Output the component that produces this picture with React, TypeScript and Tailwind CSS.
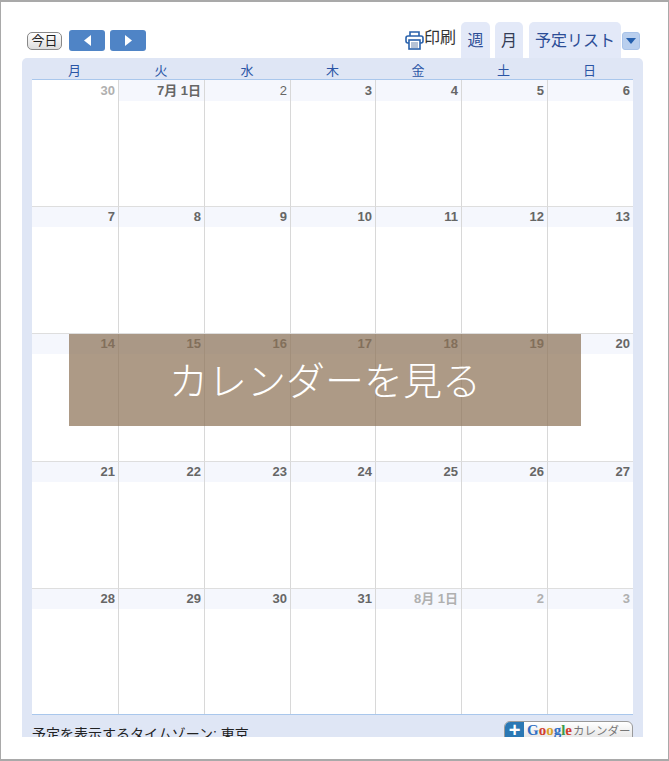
const font = { fontFamily: '"Liberation Sans", "Noto Sans CJK JP", sans-serif' }

const weekdays = ['月', '火', '水', '木', '金', '土', '日']

const weeks = [
  ['30', '7月 1日', '2', '3', '4', '5', '6'],
  ['7', '8', '9', '10', '11', '12', '13'],
  ['14', '15', '16', '17', '18', '19', '20'],
  ['21', '22', '23', '24', '25', '26', '27'],
  ['28', '29', '30', '31', '8月 1日', '2', '3'],
]

function isOtherMonth(week: number, day: number) {
  return (week === 0 && day === 0) || (week === 4 && day >= 4)
}

function DayCell({ label, week, day }: { label: string; week: number; day: number }) {
  const other = isOtherMonth(week, day)
  const plain = week === 0 && day === 0
  return (
    <div className={`min-w-0 ${day < 6 ? 'border-r border-r-[#d8d8d8]' : ''} ${week > 0 ? 'border-t border-t-[#dedede]' : ''}`}>
      <div
        className={`pr-[3px] text-right text-[13px] leading-[17px] ${week === 0 ? 'h-[21px] pt-[2px]' : 'h-[20px] pt-[1px]'} ${other ? 'text-[#b0b0b0]' : 'text-[#666666]'} ${plain ? 'bg-white' : 'bg-[#f5f7fd]'} ${label === '2' && week === 0 ? 'font-normal' : 'font-bold'}`}
      >
        {label}
      </div>
    </div>
  )
}

function PrintIcon() {
  return (
    <svg className="mt-[3px]" width="19" height="20" viewBox="0 0 19 20" fill="none" stroke="#2a62ac" strokeWidth="1.6">
      <path d="M5 6V2h9v4" />
      <rect x="1" y="6" width="17" height="7" rx="2" />
      <rect x="4" y="10" width="11" height="9" fill="#fff" />
      <path d="M6 13h7M6 15h7M6 17h7" strokeWidth="1" stroke="#6b86ad" />
    </svg>
  )
}

function Tab({ label, className, dark }: { label: string; className: string; dark?: boolean }) {
  return (
    <div className={`flex h-[36px] items-center justify-center rounded-t-[5px] bg-[#e3e9f8] pt-[1px] text-[16px] ${dark ? 'text-[#333c55]' : 'text-[#2c4d96]'} ${className}`}>
      {label}
    </div>
  )
}

function NavButton({ left }: { left?: boolean }) {
  return (
    <button type="button" className="flex h-[21px] w-[36px] items-center justify-center rounded-[3px] bg-[#4f84c6]">
      <svg width="7" height="11" viewBox="0 0 7 11" fill="#fff">
        <path d={left ? 'M7 0v11L0 5.500z' : 'M0 0v11l7-5.500z'} />
      </svg>
    </button>
  )
}

export default function App() {
  return (
    <div style={font} className="relative h-[761px] w-[669px] overflow-hidden border-x border-t-2 border-b-2 border-x-[#a9a9a9] border-y-[#a9a9a9] bg-white">
      {/* toolbar */}
      <div className="flex h-[56px] items-end pl-[26px] pr-[28px]">
        <div className="mb-[7px] flex items-center">
          <button
            type="button"
            className="flex h-[18px] w-[35px] items-center justify-center rounded-[5px] border border-[#888888] bg-gradient-to-b from-white to-[#dddddd] text-[13px] leading-none text-[#222222]"
          >
            今日
          </button>
          <div className="ml-[7px] flex gap-[5px]">
            <NavButton left />
            <NavButton />
          </div>
        </div>
        <div className="ml-auto flex items-end">
          <div className="mb-[8px] flex items-start">
            <PrintIcon />
            <span className="mt-[1px] text-[16px] leading-[20px] text-[#333333]">印刷</span>
          </div>
          <Tab label="週" className="ml-[5px] w-[29px]" />
          <Tab label="月" className="ml-[5px] w-[28px]" dark />
          <Tab label="予定リスト" className="ml-[6px] w-[92px]" />
          <div className="mb-[8px] ml-[1px] flex h-[18px] w-[18px] items-center justify-center rounded-[3px] border border-[#a9c3e8] bg-[#b9cfee]">
            <svg width="10" height="6" viewBox="0 0 10 6" fill="#2560ae">
              <path d="M0 0h10L5 6z" />
            </svg>
          </div>
        </div>
      </div>

      {/* calendar panel */}
      <div className="relative ml-[21px] h-[679px] w-[621px] overflow-hidden rounded-t-[5px] bg-[#dfe6f5]">
        <div className="ml-[9px] grid h-[21px] w-[602px] grid-cols-[87px_86px_86px_85px_86px_85px_87px] text-center text-[13px] leading-[25px] text-[#2a55a5]">
          {weekdays.map((d) => (
            <div key={d}>{d}</div>
          ))}
        </div>
        <div className="ml-[10px] grid h-[636px] w-[601px] grid-cols-[87px_86px_86px_85px_86px_86px_85px] grid-rows-[126px_127px_128px_127px_126px] border-y border-y-[#a9c7ec] bg-white">
          {weeks.map((week, w) =>
            week.map((label, d) => <DayCell key={`${w}-${d}`} label={label} week={w} day={d} />),
          )}
        </div>
        <div className="flex h-[24px] items-start pl-[10px] pr-[10px]">
          <span className="mt-[9px] text-[14px] leading-[20px] text-[#222222]">予定を表示するタイムゾーン: 東京</span>
          <div className="ml-auto mt-[6px] flex h-[24px] w-[129px] shrink-0 overflow-hidden rounded-t-[6px] border border-[#9a9a9a] bg-gradient-to-b from-white to-[#dddddd]">
            <div className="flex h-full w-[19px] justify-center bg-[#2b78b4] text-[20px] font-bold leading-[16px] text-white">+</div>
            <span className="ml-[3px] text-[15px] font-bold leading-[17px]" style={{ fontFamily: '"Liberation Serif", serif' }}>
              <span className="text-[#2f6fc4]">G</span>
              <span className="text-[#d0402f]">o</span>
              <span className="text-[#d9a22a]">o</span>
              <span className="text-[#2f6fc4]">g</span>
              <span className="text-[#3c9a4a]">l</span>
              <span className="text-[#d0402f]">e</span>
            </span>
            <span className="ml-[1px] whitespace-nowrap text-[11.5px] leading-[18px] text-[#777777]">カレンダー</span>
          </div>
        </div>
      </div>

      {/* overlay link */}
      <div className="absolute left-[68px] top-[332px] flex h-[92px] w-[512px] items-center justify-center bg-[#8d7358]/[0.72] pt-[4px] text-[39px] font-light text-white">
        カレンダーを見る
      </div>
    </div>
  )
}
